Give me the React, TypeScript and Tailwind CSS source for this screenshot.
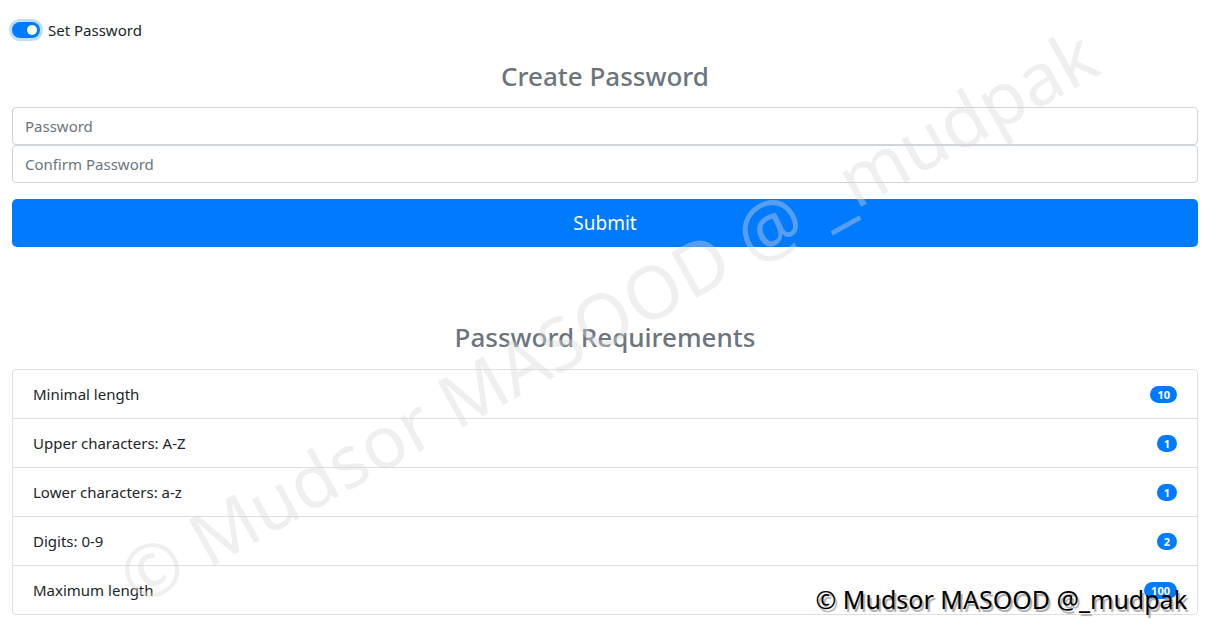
import React, { useState } from 'react';

const requirements = [
  { label: 'Minimal length', value: 10 },
  { label: 'Upper characters: A-Z', value: 1 },
  { label: 'Lower characters: a-z', value: 1 },
  { label: 'Digits: 0-9', value: 2 },
  { label: 'Maximum length', value: 100 },
];

const App: React.FC = () => {
  const [enabled, setEnabled] = useState(true);

  return (
    <div className="relative min-h-[627px] overflow-hidden bg-white pl-3 pr-[10px] pt-[20px] text-[#212529] font-['Noto_Sans','Open_Sans',sans-serif] text-[15px]">
      {/* switch */}
      <label className="flex items-center gap-[8px] h-[20px] cursor-pointer">
        <button
          onClick={() => setEnabled(v => !v)}
          className={`relative h-[16px] w-[28px] rounded-full shadow-[0_0_0_3px_rgba(0,123,255,0.25)] ${enabled ? 'bg-[#007bff]' : 'bg-[#dee2e6]'}`}
        >
          <span className={`absolute top-[3px] h-[10px] w-[10px] rounded-full bg-white ${enabled ? 'left-[15px]' : 'left-[3px]'}`} />
        </button>
        <span>Set Password</span>
      </label>

      <h3 className="mt-[19px] text-center text-[26px] font-medium leading-[34px] text-[#6c757d]">Create Password</h3>

      <div className="mt-[14px] flex flex-col">
        <input
          type="password"
          placeholder="Password"
          className="h-[38px] rounded-[4px] border border-[#ced4da] px-3 outline-none placeholder:text-[#6c757d]"
        />
        <input
          type="password"
          placeholder="Confirm Password"
          className="h-[38px] rounded-[4px] border border-[#ced4da] px-3 outline-none placeholder:text-[#6c757d]"
        />
      </div>

      <button className="mt-[16px] h-[48px] w-full rounded-[5px] bg-[#007bff] text-[19px] text-white">Submit</button>

      <h3 className="mt-[73px] text-center text-[26px] font-medium leading-[34px] text-[#6c757d]">Password Requirements</h3>

      <ul className="mt-[15px] rounded-[4px] border border-[#dfdfdf]">
        {requirements.map((r, i) => (
          <li
            key={r.label}
            className={`flex items-center justify-between px-[20px] ${i > 0 ? 'h-[49px] border-t border-[#dfdfdf]' : 'h-[48px]'}`}
          >
            <span>{r.label}</span>
            <span className="rounded-full bg-[#007bff] px-[7px] text-[11px] font-bold leading-[17px] text-white">{r.value}</span>
          </li>
        ))}
      </ul>

      {/* diagonal watermark */}
      <div className="pointer-events-none absolute left-[607px] top-[315px] -translate-x-1/2 -translate-y-1/2 -rotate-[29deg] whitespace-nowrap text-[73px] leading-none text-[rgba(215,215,215,0.4)]">
        © Mudsor MASOOD @ _mudpak
      </div>

      {/* credit */}
      <div className="pointer-events-none absolute right-[21px] top-[583px] whitespace-nowrap text-[25px] leading-[32px] text-black [text-shadow:2px_3px_1px_#aaa]">
        © Mudsor MASOOD @_mudpak
      </div>
    </div>
  );
};

export default App;
